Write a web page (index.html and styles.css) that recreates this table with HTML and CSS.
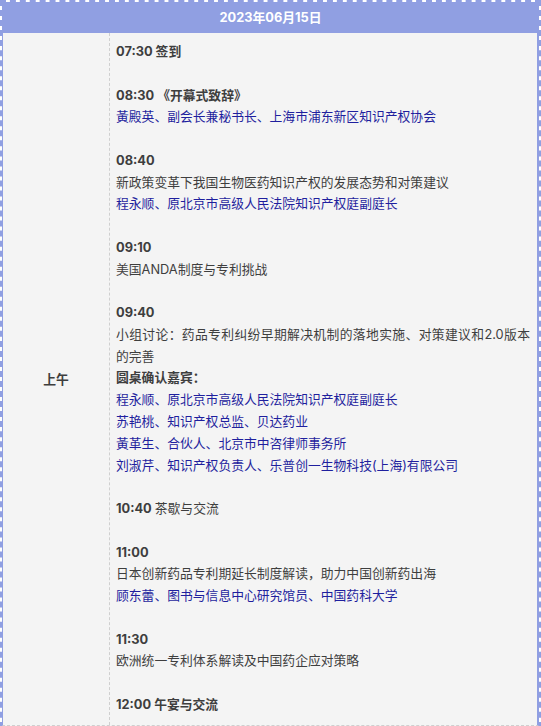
FILE: index.html
```html
<!DOCTYPE html>
<html lang="zh-CN">
<head>
<meta charset="utf-8">
<title>议程</title>
<link rel="stylesheet" href="styles.css">
</head>
<body>
<div class="schedule">
  <div class="date">2023年06月15日</div>
  <div class="row">
    <div class="period">上午</div>
    <div class="items">
      <p class="time">07:30 签到</p>
      <p class="blank">&nbsp;</p>
      <p class="time">08:30 《开幕式致辞》</p>
      <p class="name">黃殿英、副会长兼秘书长、上海市浦东新区知识产权协会</p>
      <p class="blank">&nbsp;</p>
      <p class="time">08:40</p>
      <p>新政策变革下我国生物医药知识产权的发展态势和对策建议</p>
      <p class="name">程永顺、原北京市高级人民法院知识产权庭副庭长</p>
      <p class="blank">&nbsp;</p>
      <p class="time">09:10</p>
      <p>美国ANDA制度与专利挑战</p>
      <p class="blank">&nbsp;</p>
      <p class="time">09:40</p>
      <p>小组讨论：药品专利纠纷早期解决机制的落地实施、对策建议和2.0版本的完善</p>
      <p class="time">圆桌确认嘉宾：</p>
      <p class="name">程永顺、原北京市高级人民法院知识产权庭副庭长</p>
      <p class="name">苏艳桃、知识产权总监、贝达药业</p>
      <p class="name">黃革生、合伙人、北京市中咨律师事务所</p>
      <p class="name">刘淑芹、知识产权负责人、乐普创一生物科技(上海)有限公司</p>
      <p class="blank">&nbsp;</p>
      <p class="time">10:40 <span class="plain">茶歇与交流</span></p>
      <p class="blank">&nbsp;</p>
      <p class="time">11:00</p>
      <p>日本创新药品专利期延长制度解读，助力中国创新药出海</p>
      <p class="name">顾东蕾、图书与信息中心研究馆员、中国药科大学</p>
      <p class="blank">&nbsp;</p>
      <p class="time">11:30</p>
      <p>欧洲统一专利体系解读及中国药企应对策略</p>
      <p class="blank">&nbsp;</p>
      <p class="time">12:00 午宴与交流</p>
    </div>
  </div>
  <div class="row row-next">
    <div class="period"></div>
    <div class="items"></div>
  </div>
</div>
</body>
</html>
```

FILE: styles.css
```css
* { box-sizing: border-box; }
html, body {
  margin: 0;
  padding: 0;
  background: #ffffff;
}
body {
  font-family: "Inter", "Noto Sans CJK SC", sans-serif;
  font-size: 12.8px;
  color: #3e3e3e;
}
.schedule {
  width: 541px;
  border: 2px dashed #909fe2;
}
.date {
  height: 31px;
  line-height: 31px;
  background: #909fe2;
  color: #ffffff;
  font-weight: bold;
  text-align: center;
}
.row {
  display: flex;
  background: #f4f4f4;
  border-left: 1px solid #909fe2;
  border-right: 2px solid #909fe2;
  border-bottom: 1px dashed #cfcfcf;
}
.row-next {
  min-height: 40px;
}
.period {
  width: 107px;
  flex: none;
  display: flex;
  align-items: center;
  justify-content: center;
  font-weight: bold;
  border-right: 1px dashed #cfcfcf;
}
.items {
  flex: 1;
  padding: 8px 7px 9px 6px;
}
.items p {
  margin: 0;
  line-height: 21.76px;
  text-align: justify;
}
.time { font-weight: bold; }
.plain { font-weight: normal; }
.name { color: #1f1f9e; }
```
